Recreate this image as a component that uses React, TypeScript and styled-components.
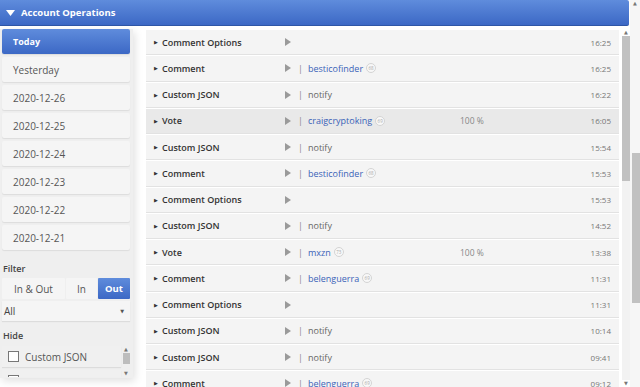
import React, { FC } from 'react';
import styled, { createGlobalStyle } from 'styled-components';

const Global = createGlobalStyle`
    html, body {
        margin: 0;
        padding: 0;
        background: #ffffff;
        overflow: hidden;
    }
    body {
        font-family: "Open Sans", "DejaVu Sans", sans-serif;
        font-size: 10px;
        color: #444;
    }
`;

const Page = styled.div`
    display: flex;
    width: 640px;
    height: 387px;
    overflow: hidden;
`;

const Main = styled.div`
    flex: 1;
    display: flex;
    flex-direction: column;
    min-width: 0;
`;

const Header = styled.div`
    height: 25px;
    display: flex;
    align-items: center;
    gap: 6px;
    padding-left: 6px;
    margin-right: 1px;
    background: linear-gradient(#5f8cdc, #3c68c5);
    border-bottom: 1px solid #2f56a6;
    border-radius: 0 2px 2px 0;
    color: #fff;
    font-weight: 700;
    font-size: 9.5px;
`;

const Body = styled.div`
    flex: 1;
    display: flex;
    min-height: 0;
    padding-top: 3px;
`;

const Sidebar = styled.div`
    width: 133px;
    height: 349px;
    flex-shrink: 0;
    display: flex;
    flex-direction: column;
    background: #efefef;
    box-shadow: 2px 3px 8px rgba(0, 0, 0, 0.12);
    padding: 0 3px 0 2px;
    box-sizing: border-box;
`;

const DateList = styled.div`
    display: flex;
    flex-direction: column;
    gap: 3px;
`;

const DateItem = styled.div<{ $active?: boolean }>`
    height: 25px;
    display: flex;
    align-items: center;
    padding-left: 11px;
    border-radius: 2px;
    background: ${p => (p.$active ? 'linear-gradient(#5f8cdc, #3c68c5)' : '#f5f5f5')};
    color: ${p => (p.$active ? '#fff' : '#555')};
    font-weight: ${p => (p.$active ? 700 : 400)};
    font-size: ${p => (p.$active ? '9px' : '10px')};
    box-shadow: 0 1px 1px rgba(0, 0, 0, 0.08);
`;

const Label = styled.div<{ $top: number }>`
    margin-top: ${p => p.$top}px;
    height: 14px;
    line-height: 14px;
    font-weight: 600;
    font-size: 9px;
    color: #444;
    padding-left: 1px;
`;

const Segments = styled.div`
    display: flex;
    gap: 1px;
    margin-top: 2px;
    height: 21px;
`;

const Segment = styled.div<{ $w: number; $active?: boolean }>`
    width: ${p => p.$w}px;
    display: flex;
    align-items: center;
    justify-content: center;
    background: ${p => (p.$active ? 'linear-gradient(#5f8cdc, #3c68c5)' : '#f5f5f5')};
    color: ${p => (p.$active ? '#fff' : '#555')};
    font-weight: ${p => (p.$active ? 700 : 400)};
    font-size: ${p => (p.$active ? '9.5px' : '10px')};
    border-radius: 1px;
`;

const Select = styled.div`
    margin-top: 2px;
    height: 20px;
    display: flex;
    align-items: center;
    justify-content: space-between;
    padding: 0 6px 0 2px;
    background: #f5f5f5;
    color: #444;
    font-size: 10px;
    box-shadow: 0 1px 1px rgba(0, 0, 0, 0.08);
`;

const Caret = styled.span`
    font-size: 5px;
    color: #555;
`;

const HideBox = styled.div`
    margin-top: 3px;
    height: 31px;
    display: flex;
    overflow: hidden;
`;

const HideItems = styled.div`
    flex: 1;
    display: flex;
    flex-direction: column;
    gap: 3px;
    min-width: 0;
`;

const HideItem = styled.div`
    height: 21px;
    flex-shrink: 0;
    display: flex;
    align-items: center;
    gap: 6px;
    padding-left: 6px;
    background: #f0f0f0;
    color: #555;
    font-size: 10px;
    white-space: nowrap;
    box-shadow: 0 1px 1px rgba(0, 0, 0, 0.08);
`;

const Check = styled.span`
    width: 9px;
    height: 9px;
    flex-shrink: 0;
    border: 1px solid #777;
    background: #fff;
`;

const MiniScroll = styled.div`
    width: 8px;
    display: flex;
    flex-direction: column;
    align-items: center;
    margin-left: 1px;
`;

const Arrow = styled.span`
    font-size: 5px;
    color: #777;
    line-height: 7px;
    height: 7px;
`;

const MiniThumb = styled.div`
    width: 7px;
    height: 11px;
    background: #bdbdbd;
`;

const Content = styled.div`
    flex: 1;
    display: flex;
    margin-left: 13px;
    min-width: 0;
`;

const Rows = styled.div`
    flex: 1;
    display: flex;
    flex-direction: column;
    gap: 2px;
    padding-top: 1px;
    background: #ffffff;
`;

const Row = styled.div<{ $hl?: boolean }>`
    height: 24.25px;
    flex-shrink: 0;
    display: flex;
    align-items: center;
    background: ${p => (p.$hl ? '#e9e9e9' : '#f4f4f4')};
    box-shadow: 0 1px 0 #e2e2e2;
    font-size: 9px;
    white-space: nowrap;
`;

const Toggle = styled.span`
    width: 16px;
    box-sizing: border-box;
    padding-left: 8px;
    font-size: 5px;
    color: #333;
`;

const OpName = styled.span`
    width: 123px;
    font-weight: 600;
    color: #333;
`;

const Play = styled.span`
    width: 0;
    height: 0;
    border-top: 4px solid transparent;
    border-bottom: 4px solid transparent;
    border-left: 6px solid #9a9a9a;
    margin-right: 7px;
`;

const Sep = styled.span`
    color: #888;
    margin-right: 5px;
`;

const Account = styled.span`
    color: #3a63b8;
`;

const Plain = styled.span`
    color: #666;
`;

const Rep = styled.span`
    display: inline-flex;
    align-items: center;
    justify-content: center;
    width: 8px;
    height: 8px;
    margin-left: 3px;
    border: 1px solid #d4d4d4;
    border-radius: 50%;
    font-size: 4.5px;
    color: #aaa;
    background: #f8f8f8;
`;

const Middle = styled.div`
    width: 175px;
    display: flex;
    align-items: center;
`;

const Weight = styled.span`
    width: 120px;
    color: #888;
    font-size: 8.5px;
`;

const Time = styled.span`
    margin-left: auto;
    margin-right: 8px;
    color: #777;
    font-size: 8px;
`;

const ScrollBar = styled.div`
    width: 8px;
    margin-left: 3px;
    display: flex;
    flex-direction: column;
    align-items: center;
`;

const Track = styled.div`
    flex: 1;
    width: 8px;
    background: #f2f2f2;
`;

const Thumb = styled.div`
    width: 8px;
    height: 145px;
    background: #c1c1c1;
`;

const PageScroll = styled.div`
    width: 10px;
    display: flex;
    flex-direction: column;
    align-items: center;
    background: #f6f6f6;
`;

const PageThumb = styled.div`
    width: 8px;
    margin-left: 2px;
    height: 150px;
    margin-top: 146px;
    background: #c1c1c1;
`;

type Op = {
    name: string;
    account?: string;
    rep?: number;
    text?: string;
    weight?: string;
    time: string;
    hl?: boolean;
};

const ops: Op[] = [
    { name: 'Comment Options', time: '16:25' },
    { name: 'Comment', account: 'besticofinder', rep: 68, time: '16:25' },
    { name: 'Custom JSON', text: 'notify', time: '16:22' },
    { name: 'Vote', account: 'craigcryptoking', rep: 69, weight: '100 %', time: '16:05', hl: true },
    { name: 'Custom JSON', text: 'notify', time: '15:54' },
    { name: 'Comment', account: 'besticofinder', rep: 68, time: '15:53' },
    { name: 'Comment Options', time: '15:53' },
    { name: 'Custom JSON', text: 'notify', time: '14:52' },
    { name: 'Vote', account: 'mxzn', rep: 73, weight: '100 %', time: '13:38' },
    { name: 'Comment', account: 'belenguerra', rep: 69, time: '11:31' },
    { name: 'Comment Options', time: '11:31' },
    { name: 'Custom JSON', text: 'notify', time: '10:14' },
    { name: 'Custom JSON', text: 'notify', time: '09:41' },
    { name: 'Comment', account: 'belenguerra', rep: 69, time: '09:12' },
];

const dates = ['Yesterday', '2020-12-26', '2020-12-25', '2020-12-24', '2020-12-23', '2020-12-22', '2020-12-21'];

const App: FC = () => {
    return (
        <Page>
            <Global />
            <Main>
                <Header>
                    <svg width="9" height="6" viewBox="0 0 9 6">
                        <path d="M0 0 L9 0 L4.5 6 Z" fill="#fff" />
                    </svg>
                    Account Operations
                </Header>
                <Body>
                    <Sidebar>
                        <DateList>
                            <DateItem $active>Today</DateItem>
                            {dates.map(d => (
                                <DateItem key={d}>{d}</DateItem>
                            ))}
                        </DateList>
                        <Label $top={12}>Filter</Label>
                        <Segments>
                            <Segment $w={63}>In &amp; Out</Segment>
                            <Segment $w={31}>In</Segment>
                            <Segment $w={32} $active>Out</Segment>
                        </Segments>
                        <Select>
                            All
                            <Caret>▼</Caret>
                        </Select>
                        <Label $top={8}>Hide</Label>
                        <HideBox>
                            <HideItems>
                                <HideItem>
                                    <Check />
                                    Custom JSON
                                </HideItem>
                                <HideItem>
                                    <Check />
                                    Beneficiary Reward
                                </HideItem>
                            </HideItems>
                            <MiniScroll>
                                <Arrow>▲</Arrow>
                                <MiniThumb />
                                <Arrow style={{ marginTop: 'auto' }}>▼</Arrow>
                            </MiniScroll>
                        </HideBox>
                    </Sidebar>
                    <Content>
                        <Rows>
                            {ops.map((op, i) => (
                                <Row key={i} $hl={op.hl}>
                                    <Toggle>▶</Toggle>
                                    <OpName>{op.name}</OpName>
                                    <Middle>
                                        <Play />
                                        {(op.account || op.text) && <Sep>|</Sep>}
                                        {op.account && <Account>{op.account}</Account>}
                                        {op.rep && <Rep>{op.rep}</Rep>}
                                        {op.text && <Plain>{op.text}</Plain>}
                                    </Middle>
                                    <Weight>{op.weight}</Weight>
                                    <Time>{op.time}</Time>
                                </Row>
                            ))}
                        </Rows>
                        <ScrollBar>
                            <Arrow>▲</Arrow>
                            <Thumb />
                            <Track />
                            <Arrow>▼</Arrow>
                        </ScrollBar>
                    </Content>
                </Body>
            </Main>
            <PageScroll>
                <Arrow>▲</Arrow>
                <PageThumb />
            </PageScroll>
        </Page>
    );
};

export default App;
